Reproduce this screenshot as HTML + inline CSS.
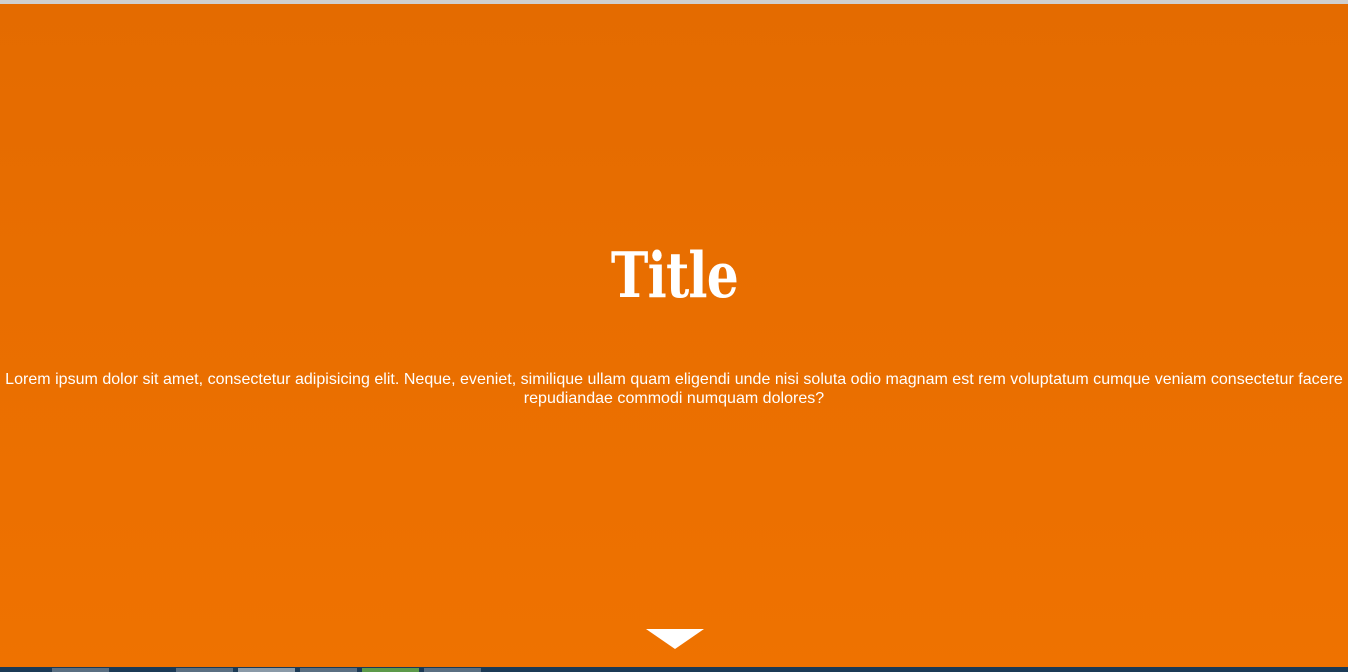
<!DOCTYPE html>
<html><head><style>
html,body{margin:0;padding:0;width:1348px;height:672px;overflow:hidden}
body{background:linear-gradient(#e46b00,#ef7200);position:relative;font-family:"Liberation Sans",sans-serif;color:#fff}
.top{position:absolute;top:0;left:0;right:0;height:4px;background:#cfcfcf}
h1{position:absolute;top:235px;left:0;right:0;margin:0;text-align:center;font:bold 63px/80px "DejaVu Serif",serif}
h1 span{display:inline-block;transform:scaleX(0.8);letter-spacing:-1px}
p{position:absolute;top:370px;left:0;right:0;margin:0;text-align:center;font-size:16px;line-height:19px;white-space:nowrap;letter-spacing:0.02px}
.tri{position:absolute;left:646px;top:629px;width:0;height:0;border-left:29px solid transparent;border-right:29px solid transparent;border-top:20px solid #fff}
.tb{position:absolute;left:0;right:0;top:667px;height:5px;background:#1b3a56}
.tb i{position:absolute;top:1px;height:4px;width:57px;background:#5a6f82}
</style></head><body>
<div class="top"></div>
<h1><span>Title</span></h1>
<p>Lorem ipsum dolor sit amet, consectetur adipisicing elit. Neque, eveniet, similique ullam quam eligendi unde nisi soluta odio magnam est rem voluptatum cumque veniam consectetur facere<br>repudiandae commodi numquam dolores?</p>
<div class="tri"></div>
<div class="tb"><i style="left:52px"></i><i style="left:176px"></i><i style="left:238px;background:#8a9aa8"></i><i style="left:300px"></i><i style="left:362px;background:#5c9a4a"></i><i style="left:424px"></i></div>
</body></html>
